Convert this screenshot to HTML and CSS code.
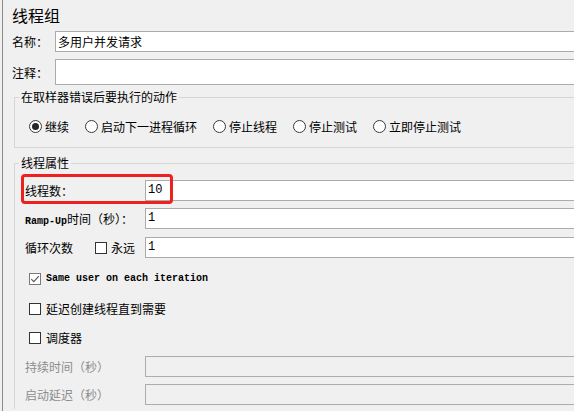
FILE: index.html
```html
<!DOCTYPE html>
<html lang="zh-CN">
<head>
<meta charset="utf-8">
<title>线程组</title>
<link rel="stylesheet" href="styles.css">
</head>
<body>
<div class="panel">
  <div class="title">线程组</div>
  <div class="row name-row"><span class="lbl">名称：</span><div class="field">多用户并发请求</div></div>
  <div class="row comment-row"><span class="lbl">注释：</span><div class="field tall"></div></div>

  <fieldset class="group g1">
    <legend>在取样器错误后要执行的动作</legend>
    <div class="radios">
      <span class="radio"><svg width="13" height="13" viewBox="0 0 13 13"><circle cx="6.5" cy="6.5" r="6" fill="#fff" stroke="#3a3a3a"/><circle cx="6.5" cy="6.5" r="3.5" fill="#262626"/></svg><span>继续</span></span>
      <span class="radio"><svg width="13" height="13" viewBox="0 0 13 13"><circle cx="6.5" cy="6.5" r="6" fill="#fff" stroke="#3a3a3a"/></svg><span>启动下一进程循环</span></span>
      <span class="radio"><svg width="13" height="13" viewBox="0 0 13 13"><circle cx="6.5" cy="6.5" r="6" fill="#fff" stroke="#3a3a3a"/></svg><span>停止线程</span></span>
      <span class="radio"><svg width="13" height="13" viewBox="0 0 13 13"><circle cx="6.5" cy="6.5" r="6" fill="#fff" stroke="#3a3a3a"/></svg><span>停止测试</span></span>
      <span class="radio"><svg width="13" height="13" viewBox="0 0 13 13"><circle cx="6.5" cy="6.5" r="6" fill="#fff" stroke="#3a3a3a"/></svg><span>立即停止测试</span></span>
    </div>
  </fieldset>

  <fieldset class="group g2">
    <legend>线程属性</legend>
    <div class="prow first"><span class="plbl">线程数：</span><div class="field val">10</div></div>
    <div class="prow r2"><span class="plbl"><span class="mono">Ramp-Up</span>时间（秒）：</span><div class="field val">1</div></div>
    <div class="prow r3">
      <span class="plbl loop"><span class="loop-txt">循环次数</span><svg class="cb" width="12" height="12" viewBox="0 0 12 12"><rect x="0.5" y="0.5" width="11" height="11" fill="#fff" stroke="#333"/></svg><span>永远</span></span>
      <div class="field val">1</div>
    </div>
    <div class="crow c1"><svg class="cb" width="12" height="12" viewBox="0 0 12 12"><rect x="0.5" y="0.5" width="11" height="11" fill="#fff" stroke="#7a7a7a"/><path d="M2.3 6.2 L4.8 8.7 L9.8 3.2" fill="none" stroke="#5a5a5a" stroke-width="1.2"/></svg><span class="mono gap">Same user on each iteration</span></div>
    <div class="crow c2"><svg class="cb" width="12" height="12" viewBox="0 0 12 12"><rect x="0.5" y="0.5" width="11" height="11" fill="#fff" stroke="#333"/></svg><span class="gap">延迟创建线程直到需要</span></div>
    <div class="crow c3"><svg class="cb" width="12" height="12" viewBox="0 0 12 12"><rect x="0.5" y="0.5" width="11" height="11" fill="#fff" stroke="#333"/></svg><span class="gap">调度器</span></div>
    <div class="prow r4 disabled"><span class="plbl">持续时间（秒）</span><div class="field off"></div></div>
    <div class="prow r5 disabled"><span class="plbl">启动延迟（秒）</span><div class="field off"></div></div>
  </fieldset>
</div>
<div class="highlight"></div>
</body>
</html>
```

FILE: styles.css
```css
html, body {
  margin: 0;
  height: 100%;
  overflow: hidden;
}
body {
  background: #f0f0f0;
  font-family: "Noto Sans CJK SC", "Noto Sans", sans-serif;
  font-size: 12px;
  color: #000;
  position: relative;
}
.panel {
  width: 572px;
  height: 411px;
  margin-left: 2px;
  border-left: 1px solid #8a8a8a;
  padding-left: 9px;
  box-sizing: border-box;
  overflow: hidden;
}
.title {
  font-size: 16px;
  height: 31px;
  line-height: 25px;
  padding-top: 3px;
  box-sizing: border-box;
}
.row {
  display: flex;
  align-items: center;
}
.lbl {
  width: 43px;
  flex: none;
}
.field {
  flex: 1;
  min-width: 0;
  height: 21px;
  box-sizing: border-box;
  background: #fff;
  border: 1px solid #ababab;
  border-right: none;
  padding-left: 2px;
  line-height: 19px;
  white-space: nowrap;
}
.name-row { height: 21px; }
.comment-row { height: 26px; margin-top: 7px; }
.field.tall { height: 26px; }

.group {
  margin: 0 0 0 2px;
  padding: 0;
  border: 1px solid #d6d6d6;
  border-right: none;
  min-width: 0;
}
.group legend {
  margin-left: 4px;
  padding: 0 2px;
  font-size: 12px;
  line-height: 14px;
  height: 14px;
}
.g1 { margin-top: 5px; }
.g2 {
  margin-top: 8px;
  border-bottom: none;
  padding-bottom: 4px;
}

.radios {
  display: flex;
  align-items: center;
  height: 20px;
  margin: 12px 0 11px 14px;
}
.radio {
  display: flex;
  align-items: center;
  margin-right: 16px;
  white-space: nowrap;
}
.radio svg {
  flex: none;
  margin-right: 3px;
}

.prow {
  display: flex;
  align-items: center;
  height: 21px;
  padding-left: 10px;
}
.plbl {
  width: 120px;
  flex: none;
  white-space: nowrap;
}
.prow.first { margin-top: 10px; }
.prow.r2 { margin-top: 7px; }
.prow.r3 { margin-top: 8px; }
.prow.r4 { margin-top: 8px; }
.prow.r5 { margin-top: 7px; }

.plbl.loop {
  display: flex;
  align-items: center;
}
.loop-txt { width: 70px; }
.loop .cb { margin-right: 4px; }

.val {
  font-family: "Liberation Mono", monospace;
  font-size: 12px;
}
.mono {
  font-family: "Liberation Mono", monospace;
  font-size: 10px;
  font-weight: bold;
}
.cb { flex: none; display: block; }

.crow {
  display: flex;
  align-items: center;
  height: 21px;
  padding-left: 14px;
}
.crow .gap { margin-left: 5px; white-space: nowrap; }
.crow.c1 { margin-top: 10px; }
.crow.c2 { margin-top: 9px; }
.crow.c3 { margin-top: 8px; }

.disabled .plbl { color: #8d8d8d; }
.field.off {
  background: transparent;
  border-color: #adadad;
  border-right: none;
}

.highlight {
  position: absolute;
  left: 21px;
  top: 174px;
  width: 152px;
  height: 30px;
  box-sizing: border-box;
  border: 3px solid #ee2020;
  border-radius: 4px;
}
```
